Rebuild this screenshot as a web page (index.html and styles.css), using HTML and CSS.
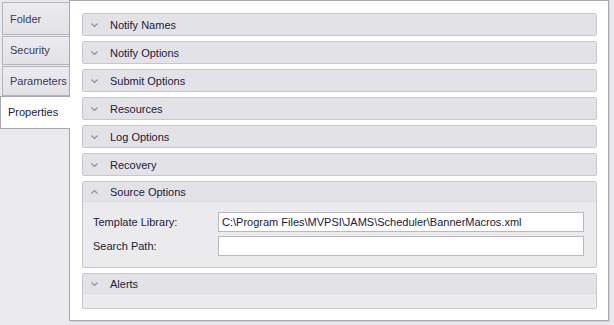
FILE: index.html
```html
<!DOCTYPE html>
<html lang="en">
<head>
    <meta charset="UTF-8">
    <title>Job Properties</title>
    <link rel="stylesheet" href="styles.css">
</head>
<body>
    <div class="window">
        <div class="tabs">
            <div class="tab first">Folder</div>
            <div class="tab">Security</div>
            <div class="tab last">Parameters</div>
            <div class="tab active">Properties</div>
        </div>
        <div class="page">
            <div class="group"><div class="group-head"><svg class="chev" width="7" height="4"><polyline points="0.5,0.5 3.5,3.5 6.5,0.5"/></svg>Notify Names</div></div>
            <div class="group"><div class="group-head"><svg class="chev" width="7" height="4"><polyline points="0.5,0.5 3.5,3.5 6.5,0.5"/></svg>Notify Options</div></div>
            <div class="group"><div class="group-head"><svg class="chev" width="7" height="4"><polyline points="0.5,0.5 3.5,3.5 6.5,0.5"/></svg>Submit Options</div></div>
            <div class="group"><div class="group-head"><svg class="chev" width="7" height="4"><polyline points="0.5,0.5 3.5,3.5 6.5,0.5"/></svg>Resources</div></div>
            <div class="group"><div class="group-head"><svg class="chev" width="7" height="4"><polyline points="0.5,0.5 3.5,3.5 6.5,0.5"/></svg>Log Options</div></div>
            <div class="group"><div class="group-head"><svg class="chev" width="7" height="4"><polyline points="0.5,0.5 3.5,3.5 6.5,0.5"/></svg>Recovery</div></div>
            <div class="group open">
                <div class="group-head"><svg class="chev" width="7" height="4"><polyline points="0.5,3.5 3.5,0.5 6.5,3.5"/></svg>Source Options</div>
                <div class="group-body">
                    <div class="row">
                        <label>Template Library:</label>
                        <div class="input">C:\Program Files\MVPSI\JAMS\Scheduler\BannerMacros.xml</div>
                    </div>
                    <div class="row">
                        <label>Search Path:</label>
                        <div class="input"></div>
                    </div>
                </div>
            </div>
            <div class="group open">
                <div class="group-head"><svg class="chev" width="7" height="4"><polyline points="0.5,0.5 3.5,3.5 6.5,0.5"/></svg>Alerts</div>
                <div class="group-body empty"></div>
            </div>
        </div>
    </div>
</body>
</html>
```

FILE: styles.css
```css
body {
    margin: 0;
    background-color: #eaeaee;
    font-family: "Liberation Sans", Arial, sans-serif;
    font-size: 11px;
    color: #20203a;
}
.window {
    display: flex;
    width: 614px;
    height: 325px;
}
.tabs {
    width: 69px;
    flex-shrink: 0;
    padding-top: 2px;
    display: flex;
    flex-direction: column;
    position: relative;
    z-index: 1;
}
.tab {
    height: 27px;
    margin-left: 2px;
    margin-bottom: 1px;
    padding-left: 7px;
    line-height: 27px;
    background: linear-gradient(#ececf0, #e2e2e6);
    border: 1px solid #b4b4ba;
    border-right: none;
    color: #3c3c50;
    white-space: nowrap;
    overflow: hidden;
}
.tab.first {
    height: 31px;
    line-height: 33px;
}
.tab.last {
    height: 28px;
    line-height: 29px;
    margin-bottom: 0;
}
.tab.active {
    margin-left: 0;
    margin-right: -1px;
    padding-left: 7px;
    height: 31px;
    line-height: 31px;
    background: #fff;
    color: #20203a;
    border-color: #a8a8ae;
}
.page {
    box-sizing: border-box;
    width: 540px;
    height: 321px;
    flex-shrink: 0;
    background-color: #fff;
    border: 1px solid #a8a8ae;
    padding: 12px 11px 0 12px;
    box-shadow: 1px 1px 1px #d8d8dc;
}
.group {
    margin-bottom: 5px;
    border: 1px solid #c6c6cc;
    border-radius: 2px;
    background-color: #ebebee;
}
.group-head {
    height: 21px;
    background-color: #e3e3e7;
    display: flex;
    align-items: center;
}
.chev {
    margin-left: 8px;
    margin-right: 12px;
    fill: none;
    stroke: #92929a;
    stroke-width: 1.2;
}
.group.open .group-head {
    border-bottom: 1px solid #dcdce0;
    height: 19px;
}
.group-body {
    padding: 10px 12px 11px 10px;
}
.group-body.empty {
    height: 14px;
    padding: 0;
}
.row {
    display: flex;
    align-items: center;
    margin-bottom: 4px;
}
.row:last-child {
    margin-bottom: 0;
}
label {
    width: 125px;
}
.input {
    flex: 1;
    height: 18px;
    line-height: 18px;
    padding-left: 3px;
    background-color: #fff;
    border: 1px solid #b8b8be;
}
```
